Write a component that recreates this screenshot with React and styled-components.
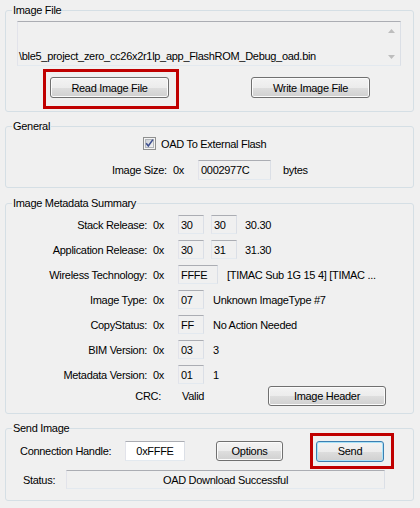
import React from 'react';
import styled, { createGlobalStyle } from 'styled-components';

const GlobalStyle = createGlobalStyle`
  html, body {
    margin: 0;
    padding: 0;
    background: #f0f0f0;
  }
  body {
    font-family: "Liberation Sans", Arial, sans-serif;
    font-size: 11px;
    letter-spacing: -0.3px;
    color: #000;
  }
`;

const Window = styled.div`
  width: 420px;
  height: 508px;
  box-sizing: border-box;
  padding: 3px 6px 0 5px;
  display: flex;
  flex-direction: column;
`;

const Group = styled.fieldset`
  margin: ${p => p.$gap || 0}px 0 0;
  padding: 0;
  min-width: 0;
  border: 1px solid #d5dfe5;
  border-radius: 3px;
`;

const Legend = styled.legend`
  margin-left: 6px;
  padding: 0 1px;
  line-height: 14px;
`;

const Body = styled.div`
  padding: ${p => p.$pad};
  display: flex;
  flex-direction: column;
  gap: ${p => p.$gap || 0}px;
`;

const TextField = styled.div`
  box-sizing: border-box;
  display: flex;
  align-items: center;
  justify-content: ${p => (p.$center ? 'center' : 'flex-start')};
  width: ${p => (p.$w ? `${p.$w}px` : 'auto')};
  height: ${p => p.$h || 19}px;
  margin-left: ${p => p.$ml || 0}px;
  padding-left: ${p => (p.$center ? 0 : 2)}px;
  flex: none;
  border: 1px solid;
  border-color: #abadb3 #dbdfe6 #e3e9ef #e2e3ea;
  background: ${p => (p.$white ? '#fff' : '#f0f0f0')};
  white-space: nowrap;
`;

const PathBox = styled.div`
  box-sizing: border-box;
  height: 45px;
  display: flex;
  border: 1px solid;
  border-color: #abadb3 #dbdfe6 #e3e9ef #e2e3ea;
  background: #f0f0f0;
`;

const PathText = styled.div`
  flex: 1;
  align-self: flex-end;
  padding: 0 0 2px 1px;
  line-height: 13px;
  white-space: nowrap;
  overflow: hidden;
`;

const ScrollBar = styled.div`
  width: 17px;
  display: flex;
  flex-direction: column;
  justify-content: space-between;
  background: #f0f0f0;
`;

const ScrollArrow = styled.div`
  height: 17px;
  display: flex;
  align-items: center;
  justify-content: center;
`;

const ButtonRow = styled.div`
  display: flex;
  justify-content: space-between;
  margin-top: 11px;
  padding: 0 31px 0 33px;
`;

const Button = styled.button`
  box-sizing: border-box;
  flex: none;
  width: ${p => p.$w}px;
  height: ${p => p.$h || 20}px;
  margin-left: ${p => p.$ml || 0}px;
  padding: 0;
  border: 1px solid ${p => (p.$default ? '#3c7fb1' : '#707070')};
  border-radius: 3px;
  background: linear-gradient(#f3f3f3 0%, #ececec 50%, #dedede 51%, #d0d0d0 100%);
  box-shadow: inset 0 0 0 1px ${p => (p.$default ? '#a8e2f8' : '#fbfbfb')};
  font: inherit;
  letter-spacing: inherit;
  color: #000;
`;

// red annotation frame drawn over a button
const Highlight = styled.span`
  position: relative;
  display: inline-flex;
  margin-left: ${p => p.$ml || 0}px;

  &::after {
    content: '';
    position: absolute;
    top: ${p => -p.$box[0]}px;
    right: ${p => -p.$box[1]}px;
    bottom: ${p => -p.$box[2]}px;
    left: ${p => -p.$box[3]}px;
    border: 3px solid #c00000;
    pointer-events: none;
  }
`;

const CheckRow = styled.label`
  display: flex;
  align-items: center;
  gap: 5px;
  height: 13px;
  padding-left: 137px;
`;

const Row = styled.div`
  display: flex;
  align-items: center;
  height: ${p => p.$h || 19}px;
  padding-left: ${p => p.$indent || 0}px;
  margin-top: ${p => p.$mt || 0}px;
`;

const Text = styled.span`
  flex: none;
  width: ${p => (p.$w ? `${p.$w}px` : 'auto')};
  margin-left: ${p => p.$ml || 0}px;
  text-align: ${p => p.$align || 'left'};
  white-space: nowrap;
`;

const CheckBox = () => (
  <svg width="13" height="13" viewBox="0 0 13 13">
    <defs>
      <linearGradient id="cbg" x1="0" y1="0" x2="1" y2="1">
        <stop offset="0" stopColor="#cbcfd5" />
        <stop offset="1" stopColor="#f6f6f6" />
      </linearGradient>
    </defs>
    <rect x="0.5" y="0.5" width="12" height="12" fill="#f4f4f4" stroke="#8e8f8f" />
    <rect x="2.5" y="2.5" width="8" height="8" fill="url(#cbg)" stroke="#b1b5ba" />
    <path d="M3.2 6.3 L5.3 8.9 L9.9 2.6" stroke="#3d4f8f" strokeWidth="1.6" fill="none" />
  </svg>
);

const Arrow = ({ up }) => (
  <svg width="7" height="4" viewBox="0 0 7 4">
    <path d={up ? 'M0 4 L3.5 0 L7 4 Z' : 'M0 0 L3.5 4 L7 0 Z'} fill="#bdbdbd" />
  </svg>
);

const metadata = [
  { label: 'Stack Release:', fields: [['30', 26], ['30', 26]], note: '30.30', noteGap: 8 },
  { label: 'Application Release:', fields: [['30', 26], ['31', 26]], note: '31.30', noteGap: 8 },
  { label: 'Wireless Technology:', fields: [['FFFE', 40]], note: '[TIMAC Sub 1G 15 4] [TIMAC ...', noteGap: 9 },
  { label: 'Image Type:', fields: [['07', 26]], note: 'Unknown ImageType #7', noteGap: 9 },
  { label: 'CopyStatus:', fields: [['FF', 26]], note: 'No Action Needed', noteGap: 9 },
  { label: 'BIM Version:', fields: [['03', 26]], note: '3', noteGap: 9 },
  { label: 'Metadata Version:', fields: [['01', 26]], note: '1', noteGap: 9 },
];

export default function App() {
  return (
    <Window>
      <GlobalStyle />

      <Group>
        <Legend>Image File</Legend>
        <Body $pad="4px 12px 13px 11px">
          <PathBox>
            <PathText>\ble5_project_zero_cc26x2r1lp_app_FlashROM_Debug_oad.bin</PathText>
            <ScrollBar>
              <ScrollArrow><Arrow up /></ScrollArrow>
              <ScrollArrow><Arrow /></ScrollArrow>
            </ScrollBar>
          </PathBox>
          <ButtonRow>
            <Highlight $box={[8, 10, 11, 7]}>
              <Button $w={119} $h={21}>Read Image File</Button>
            </Highlight>
            <Button $w={119} $h={21}>Write Image File</Button>
          </ButtonRow>
        </Body>
      </Group>

      <Group $gap={7}>
        <Legend>General</Legend>
        <Body $pad="4px 0 7px" $gap={10}>
          <CheckRow>
            <CheckBox />
            <span>OAD To External Flash</span>
          </CheckRow>
          <Row $h={20} $indent={106}>
            <Text $w={61}>Image Size:</Text>
            <Text $w={25}>0x</Text>
            <TextField $w={73} $h={20}>0002977C</TextField>
            <Text $ml={12}>bytes</Text>
          </Row>
        </Body>
      </Group>

      <Group $gap={8}>
        <Legend>Image Metadata Summary</Legend>
        <Body $pad="5px 0 7px" $gap={6}>
          {metadata.map(m => (
            <Row key={m.label}>
              <Text $w={141} $align="right">{m.label}</Text>
              <Text $w={25} $ml={6}>0x</Text>
              {m.fields.map(([v, w], i) => (
                <TextField key={i} $w={w} $ml={i ? 7 : 0}>{v}</TextField>
              ))}
              <Text $ml={m.noteGap}>{m.note}</Text>
            </Row>
          ))}
          <Row $h={20} $mt={-4}>
            <Text $w={155} $align="right">CRC:</Text>
            <Text $w={86} $ml={21}>Valid</Text>
            <Button $w={118}>Image Header</Button>
          </Row>
        </Body>
      </Group>

      <Group $gap={7}>
        <Legend>Send Image</Legend>
        <Body $pad="6px 0 11px" $gap={9}>
          <Row $h={20} $indent={14}>
            <Text $w={105}>Connection Handle:</Text>
            <TextField $w={60} $h={20} $white $center>0xFFFE</TextField>
            <Button $w={67} $ml={31}>Options</Button>
            <Highlight $ml={33} $box={[8, 10, 7, 6]}>
              <Button $w={68} $h={21} $default>Send</Button>
            </Highlight>
          </Row>
          <Row $indent={17}>
            <Text $w={43}>Status:</Text>
            <TextField $w={319} $center>OAD Download Successful</TextField>
          </Row>
        </Body>
      </Group>
    </Window>
  );
}
